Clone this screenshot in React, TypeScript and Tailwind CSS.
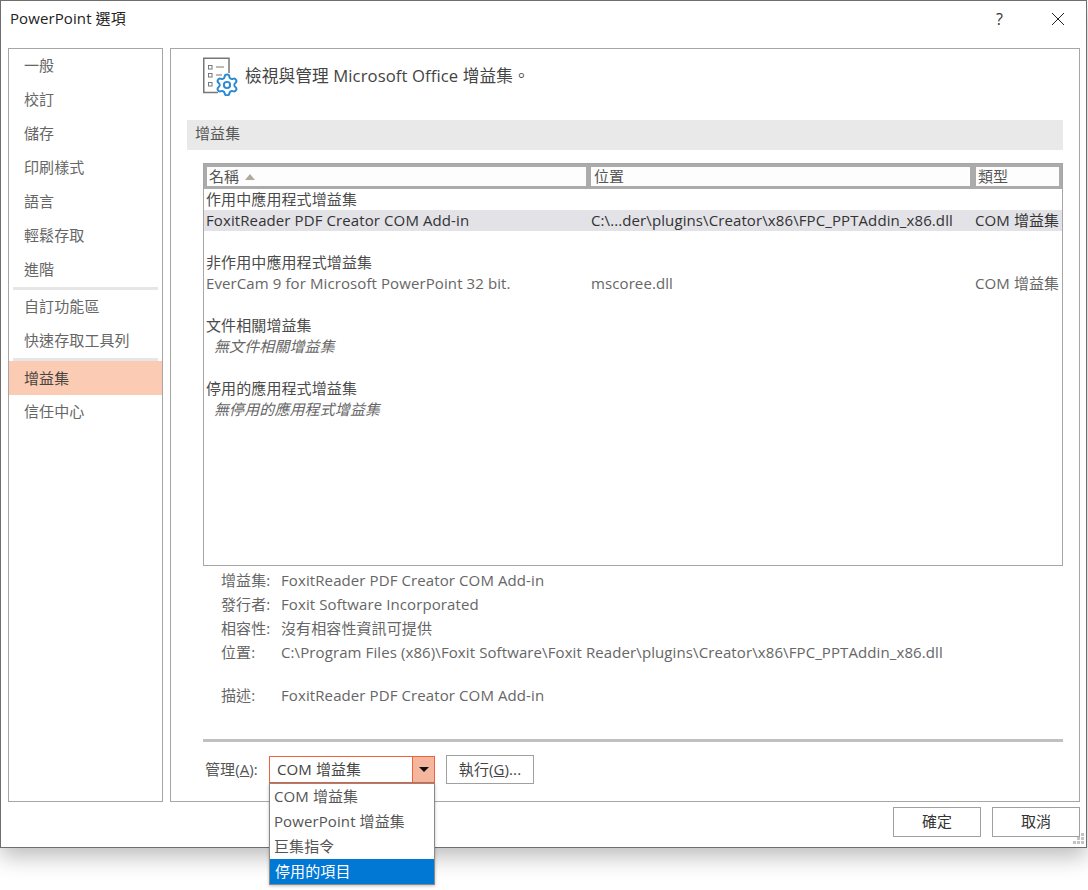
import React from 'react';
import { Settings } from 'lucide-react';

const font = { fontFamily: '"Open Sans", "Noto Sans CJK TC", sans-serif' };

const navTop = ['校訂', '儲存', '印刷樣式', '語言', '輕鬆存取', '進階'];

const NavItem: React.FC<{ label: string; active?: boolean; first?: boolean; tight?: boolean }> = ({ label, active, first, tight }) => (
  <div className={`flex items-center pl-[15px] ${tight ? 'pt-[1px]' : 'pb-[1px]'} ${first ? 'h-[33px]' : 'h-[34px]'} ${active ? 'bg-[#fccbb3] text-[#444]' : 'text-[#666]'}`}>
    {label}
  </div>
);

const Group: React.FC<{ title: string }> = ({ title }) => (
  <div className="h-[21px] leading-[21px] pl-[2px] text-[#4a4a4a]">{title}</div>
);

const Row: React.FC<{ name: string; place: string; kind: string; selected?: boolean }> = ({ name, place, kind, selected }) => (
  <div className={`grid grid-cols-[385px_384px_1fr] h-[21px] leading-[21px] pl-[2px] whitespace-nowrap ${selected ? 'bg-[#e2e2e7] text-[#333]' : 'text-[#666]'}`}>
    <span>{name}</span>
    <span>{place}</span>
    <span className="overflow-hidden">{kind}</span>
  </div>
);

const Empty: React.FC<{ text: string }> = ({ text }) => (
  <div className="h-[21px] leading-[21px] pl-[10px] italic text-[#666]">{text}</div>
);

const Detail: React.FC<{ label: string; value: string; className?: string }> = ({ label, value, className }) => (
  <div className={`grid grid-cols-[60px_1fr] h-[24px] leading-[24px] whitespace-nowrap text-[#666] ${className ?? ''}`}>
    <span>{label}</span>
    <span>{value}</span>
  </div>
);

const DocIcon = () => (
  <svg width="35" height="39" viewBox="0 0 35 39" className="shrink-0" fill="none">
    <path d="M15 35.5H0.75V1.25H26V16" stroke="#777" strokeWidth="1.5" />
    <rect x="5.5" y="8.5" width="3.5" height="3.5" stroke="#777" />
    <rect x="5.5" y="16.5" width="3.5" height="3.5" stroke="#777" />
    <rect x="5.5" y="25.5" width="3.5" height="3.5" stroke="#777" />
    <path d="M13 10H21M13 18H19" stroke="#777" />
    <Settings x={11.5} y={15.5} size={25} color="#2a8ad4" strokeWidth={1.9} />
  </svg>
);

const Grip = () => (
  <svg width="12" height="12" viewBox="0 0 12 12" className="absolute right-[1px] bottom-[2px]" fill="#c4c4c4">
    <rect x="8" y="0" width="3" height="3" />
    <rect x="4" y="4" width="3" height="3" />
    <rect x="8" y="4" width="3" height="3" />
    <rect x="0" y="8" width="3" height="3" />
    <rect x="4" y="8" width="3" height="3" />
    <rect x="8" y="8" width="3" height="3" />
  </svg>
);

export default function App() {
  return (
    <div className="w-[1088px] h-[890px] bg-white overflow-hidden text-[15px] tracking-[0.1px]" style={font}>
      <div className="relative flex flex-col w-[1087px] h-[848px] bg-white border border-[#6e6e6e] shadow-[0_8px_22px_rgba(0,0,0,0.28)]">
        <div className="flex items-center h-[47px] pb-[12px] pl-[9px] text-[#222]">
          <span>PowerPoint 選項</span>
          <span className="ml-auto mr-[48px] text-[16px] text-[#333]">?</span>
          <svg width="14" height="14" viewBox="0 0 14 14" className="mr-[21px]" stroke="#222" fill="none">
            <path d="M1 1L13 13M13 1L1 13" />
          </svg>
        </div>

        <div className="flex gap-[7px] h-[754px] pl-[7px]">
          <div className="w-[155px] border border-[#a6a6a6]">
            <NavItem label="一般" first />
            {navTop.map((l) => <NavItem key={l} label={l} tight />)}
            <div className="h-[3px] mt-[1px] mx-[4px] bg-[#e6e6e6]" />
            <NavItem label="自訂功能區" />
            <NavItem label="快速存取工具列" />
            <div className="h-[3px] mx-[4px] bg-[#e6e6e6]" />
            <NavItem label="增益集" active tight />
            <NavItem label="信任中心" />
          </div>

          <div className="w-[910px] border border-[#a6a6a6]">
            <div className="flex items-center gap-[7px] h-[71px] pl-[32px] pb-[17px] text-[16.67px] text-[#444]">
              <DocIcon />
              <span className="pb-[2px]">檢視與管理 Microsoft Office 增益集。</span>
            </div>
            <div className="flex items-center h-[30px] ml-[16px] w-[876px] pl-[8px] pb-[3px] bg-[#e9e9e9] text-[#555]">增益集</div>

            <div className="mt-[13px] ml-[32px] w-[860px] h-[403px] border border-[#a6a6a6] overflow-hidden">
              <div className="flex h-[25px] bg-[#ababab] pt-[3px] pb-[3px] pl-[3px] text-[#555] leading-[17px]">
                <div className="flex items-center gap-[6px] w-[379px] bg-[#fdfdfd] pl-[2px]">
                  名稱
                  <svg width="10" height="6" viewBox="0 0 10 6" fill="#b0aa9c"><path d="M0 6L5 0L10 6Z" /></svg>
                </div>
                <div className="flex items-center w-[379px] ml-[5px] bg-[#fdfdfd] pl-[3px]">位置</div>
                <div className="flex items-center w-[83px] ml-[6px] bg-[#fdfdfd] pl-[2px]">類型</div>
              </div>
              <Group title="作用中應用程式增益集" />
              <Row selected name="FoxitReader PDF Creator COM Add-in" place="C:\...der\plugins\Creator\x86\FPC_PPTAddin_x86.dll" kind="COM 增益集" />
              <div className="h-[21px]" />
              <Group title="非作用中應用程式增益集" />
              <Row name="EverCam 9 for Microsoft PowerPoint 32 bit." place="mscoree.dll" kind="COM 增益集" />
              <div className="h-[21px]" />
              <Group title="文件相關增益集" />
              <Empty text="無文件相關增益集" />
              <div className="h-[21px]" />
              <Group title="停用的應用程式增益集" />
              <Empty text="無停用的應用程式增益集" />
            </div>

            <div className="mt-[2px] ml-[50px]">
              <Detail label="增益集:" value="FoxitReader PDF Creator COM Add-in" />
              <Detail label="發行者:" value="Foxit Software Incorporated" />
              <Detail label="相容性:" value="沒有相容性資訊可提供" />
              <Detail label="位置:" value="C:\Program Files (x86)\Foxit Software\Foxit Reader\plugins\Creator\x86\FPC_PPTAddin_x86.dll" />
              <Detail className="mt-[19px]" label="描述:" value="FoxitReader PDF Creator COM Add-in" />
            </div>

            <div className="mt-[32px] ml-[32px] w-[860px] h-[3px] bg-[#c0c0c0]" />

            <div className="flex items-center mt-[13px] ml-[34px] h-[29px] text-[#555]">
              <span className="w-[64px] pb-[1px]">管理(<span className="underline">A</span>):</span>
              <div className="relative flex w-[166px] h-[27px] border border-[#f0623e] text-[#444]">
                <div className="flex-1 flex items-center pl-[7px] pb-[1px]">COM 增益集</div>
                <div className="flex items-center justify-center w-[22px] bg-[#f4b79d] border-l border-[#f0623e]">
                  <svg width="10" height="5" viewBox="0 0 10 5" fill="#111"><path d="M0 0H10L5 5Z" /></svg>
                </div>
                <div className="absolute left-[-1px] top-[26px] w-[166px] bg-white border border-[#8a8a8a] shadow-[0_1px_3px_rgba(0,0,0,0.25)] z-10 text-[#555]">
                  <div className="h-[25px] leading-[25px] pl-[4px]">COM 增益集</div>
                  <div className="h-[25px] leading-[25px] pl-[4px]">PowerPoint 增益集</div>
                  <div className="h-[25px] leading-[25px] pl-[4px]">巨集指令</div>
                  <div className="h-[25px] leading-[25px] pl-[5px] bg-[#0078d4] text-white">停用的項目</div>
                </div>
              </div>
              <div className="flex items-center justify-center w-[88px] h-[29px] ml-[11px] pb-[1px] border border-[#a0a0a0] text-[#444]">
                <span>執行(<span className="underline">G</span>)...</span>
              </div>
            </div>
          </div>
        </div>

        <div className="flex justify-end gap-[11px] pt-[5px] pr-[6px] text-[#333]">
          <div className="flex items-center justify-center w-[88px] h-[30px] pb-[1px] border border-[#a0a0a0]">確定</div>
          <div className="flex items-center justify-center w-[88px] h-[30px] pb-[1px] border border-[#a0a0a0]">取消</div>
        </div>
        <Grip />
      </div>
    </div>
  );
}
